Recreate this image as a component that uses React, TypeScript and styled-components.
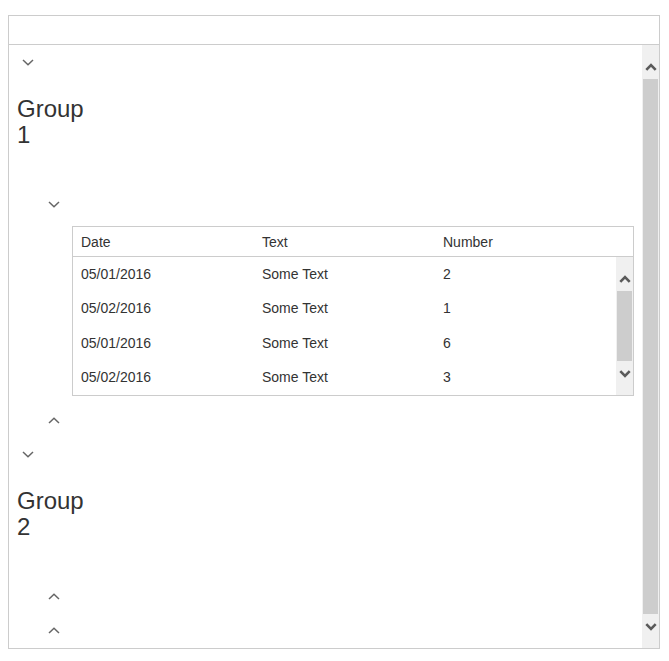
import React from "react";
import styled, { createGlobalStyle } from "styled-components";

const GlobalStyle = createGlobalStyle`
  html, body {
    margin: 0;
    padding: 0;
    background: #ffffff;
  }
  body {
    font-family: "Liberation Sans", Arial, sans-serif;
    color: #333333;
  }
`;

const Page = styled.div`
  padding: 15px 10px 0 8px;
`;

const Frame = styled.div`
  width: 652px;
  box-sizing: border-box;
  border: 1px solid #cccccc;
  display: flex;
  flex-direction: column;
`;

const Toolbar = styled.div`
  height: 28px;
  border-bottom: 1px solid #cccccc;
`;

const Viewport = styled.div<{ $height: number }>`
  display: flex;
  height: ${(p) => p.$height}px;
`;

const Content = styled.div`
  flex: 1;
  min-width: 0;
  overflow: hidden;
  padding: 0 8px 0 8px;
  display: flex;
  flex-direction: column;
`;

/* ---------- scrollbar ---------- */

const Track = styled.div`
  flex: 0 0 17px;
  width: 17px;
  background: #f0f0f0;
  display: flex;
  flex-direction: column;
`;

const ScrollButton = styled.div<{ $dir: "up" | "down" }>`
  flex: 0 0 34px;
  height: 34px;
  box-sizing: border-box;
  display: flex;
  justify-content: center;
  align-items: ${(p) => (p.$dir === "up" ? "flex-end" : "flex-start")};
  padding: ${(p) => (p.$dir === "up" ? "0 0 8px" : "9px 0 0")};
`;

const Thumb = styled.div`
  flex: 1;
  margin: 0 1px 0 1px;
  background: #cdcdcd;
`;

const ScrollArrow = ({ dir }: { dir: "up" | "down" }) => (
  <svg width="12" height="8" viewBox="0 0 12 8">
    <polyline
      points={dir === "up" ? "1.3,6.8 6,2 10.7,6.8" : "1.3,1.2 6,6 10.7,1.2"}
      fill="none"
      stroke="#5a5a5a"
      strokeWidth="2.6"
    />
  </svg>
);

const Scrollbar = () => (
  <Track>
    <ScrollButton $dir="up">
      <ScrollArrow dir="up" />
    </ScrollButton>
    <Thumb />
    <ScrollButton $dir="down">
      <ScrollArrow dir="down" />
    </ScrollButton>
  </Track>
);

/* ---------- expander rows ---------- */

const ExpanderRow = styled.div<{ $indent: number }>`
  flex: 0 0 34px;
  height: 34px;
  display: flex;
  align-items: center;
  padding-left: ${(p) => p.$indent}px;
`;

const Chevron = ({ dir }: { dir: "up" | "down" }) => (
  <svg width="12" height="7" viewBox="0 0 12 7">
    <polyline
      points={dir === "down" ? "1,1 6,5.8 11,1" : "1,6 6,1.2 11,6"}
      fill="none"
      stroke="#666666"
      strokeWidth="1.5"
    />
  </svg>
);

const GroupTitle = styled.div`
  width: 70px;
  margin: 17px 0 39px 0;
  font-size: 24px;
  line-height: 26px;
  color: #333333;
`;

/* ---------- data table ---------- */

const Table = styled.div`
  margin: 5px 0 7px 55px;
  border: 1px solid #cccccc;
  display: flex;
  flex-direction: column;
  font-size: 14px;
  color: #333333;
`;

const HeaderRow = styled.div`
  height: 29px;
  display: grid;
  grid-template-columns: 181px 181px 181px 1fr;
  align-items: center;
  border-bottom: 1px solid #cccccc;
`;

const Cell = styled.div`
  padding-left: 8px;
  white-space: nowrap;
`;

const TableBody = styled.div`
  height: 138px;
  display: flex;
`;

const Rows = styled.div`
  flex: 1;
  display: flex;
  flex-direction: column;
`;

const Row = styled.div`
  height: 34.25px;
  display: grid;
  grid-template-columns: 181px 181px 1fr;
  align-items: center;
`;

const records = [
  { date: "05/01/2016", text: "Some Text", number: 2 },
  { date: "05/02/2016", text: "Some Text", number: 1 },
  { date: "05/01/2016", text: "Some Text", number: 6 },
  { date: "05/02/2016", text: "Some Text", number: 3 },
];

export default function App() {
  return (
    <>
      <GlobalStyle />
      <Page>
        <Frame>
          <Toolbar />
          <Viewport $height={603}>
            <Content>
              <ExpanderRow $indent={5}>
                <Chevron dir="down" />
              </ExpanderRow>
              <GroupTitle>Group 1</GroupTitle>
              <ExpanderRow $indent={31}>
                <Chevron dir="down" />
              </ExpanderRow>
              <Table>
                <HeaderRow>
                  <Cell>Date</Cell>
                  <Cell>Text</Cell>
                  <Cell>Number</Cell>
                  <span />
                </HeaderRow>
                <TableBody>
                  <Rows>
                    {records.map((r, i) => (
                      <Row key={i}>
                        <Cell>{r.date}</Cell>
                        <Cell>{r.text}</Cell>
                        <Cell>{r.number}</Cell>
                      </Row>
                    ))}
                  </Rows>
                  <Scrollbar />
                </TableBody>
              </Table>
              <ExpanderRow $indent={31}>
                <Chevron dir="up" />
              </ExpanderRow>
              <ExpanderRow $indent={5}>
                <Chevron dir="down" />
              </ExpanderRow>
              <GroupTitle>Group 2</GroupTitle>
              <ExpanderRow $indent={31}>
                <Chevron dir="up" />
              </ExpanderRow>
              <ExpanderRow $indent={31}>
                <Chevron dir="up" />
              </ExpanderRow>
            </Content>
            <Scrollbar />
          </Viewport>
        </Frame>
      </Page>
    </>
  );
}
